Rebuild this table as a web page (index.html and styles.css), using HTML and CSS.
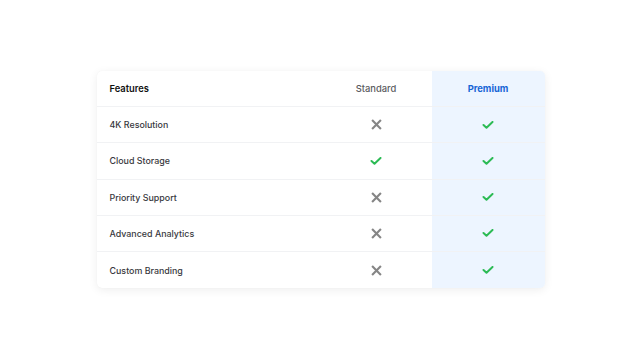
FILE: index.html
```html
<!DOCTYPE html>
<html lang="en">
<head>
<meta charset="utf-8">
<title>Plan comparison</title>
<link rel="stylesheet" href="styles.css">
</head>
<body>
<main class="page">
  <div class="table">
    <div class="row head">
      <div class="cell feat">Features</div>
      <div class="cell std">Standard</div>
      <div class="cell prem">Premium</div>
    </div>
    <div class="row">
      <div class="cell feat">4K Resolution</div>
      <div class="cell std"><svg class="ic-x" viewBox="0 0 12 12"><path d="M2 2L10 10M10 2L2 10"/></svg></div>
      <div class="cell prem"><svg class="ic-c" viewBox="0 0 12 8"><path d="M1.5 4L4.5 6.8L10.5 1"/></svg></div>
    </div>
    <div class="row">
      <div class="cell feat">Cloud Storage</div>
      <div class="cell std"><svg class="ic-c" viewBox="0 0 12 8"><path d="M1.5 4L4.5 6.8L10.5 1"/></svg></div>
      <div class="cell prem"><svg class="ic-c" viewBox="0 0 12 8"><path d="M1.5 4L4.5 6.8L10.5 1"/></svg></div>
    </div>
    <div class="row">
      <div class="cell feat">Priority Support</div>
      <div class="cell std"><svg class="ic-x" viewBox="0 0 12 12"><path d="M2 2L10 10M10 2L2 10"/></svg></div>
      <div class="cell prem"><svg class="ic-c" viewBox="0 0 12 8"><path d="M1.5 4L4.5 6.8L10.5 1"/></svg></div>
    </div>
    <div class="row">
      <div class="cell feat">Advanced Analytics</div>
      <div class="cell std"><svg class="ic-x" viewBox="0 0 12 12"><path d="M2 2L10 10M10 2L2 10"/></svg></div>
      <div class="cell prem"><svg class="ic-c" viewBox="0 0 12 8"><path d="M1.5 4L4.5 6.8L10.5 1"/></svg></div>
    </div>
    <div class="row last">
      <div class="cell feat">Custom Branding</div>
      <div class="cell std"><svg class="ic-x" viewBox="0 0 12 12"><path d="M2 2L10 10M10 2L2 10"/></svg></div>
      <div class="cell prem"><svg class="ic-c" viewBox="0 0 12 8"><path d="M1.5 4L4.5 6.8L10.5 1"/></svg></div>
    </div>
  </div>
</main>
</body>
</html>
```

FILE: styles.css
```css
* { box-sizing: border-box; }
html, body { margin: 0; padding: 0; background: #ffffff; }
body { font-family: Inter, "Noto Sans", "Liberation Sans", sans-serif; }
.page {
  min-height: 360px;
  display: flex;
  align-items: center;
  justify-content: center;
  padding-bottom: 1px;
}
.table {
  width: 448px;
  background: #fff;
  border-radius: 5px;
  overflow: hidden;
  box-shadow: 0 2px 10px rgba(0,0,0,0.07), 0 0 1px rgba(0,0,0,0.06);
}
.row {
  display: grid;
  grid-template-columns: 224px 111px 113px;
  height: 36.3px;
  border-bottom: 1px solid #f1f2f4;
}
.row.last { border-bottom: none; }
.cell {
  display: flex;
  align-items: center;
  font-size: 8.9px;
  font-weight: 500;
  color: #38383d;
}
.feat { padding-left: 13px; }
.std, .prem { justify-content: center; }
.prem { background: #edf5ff; }
.head .cell { font-size: 9.4px; }
.head .feat { font-weight: 600; color: #111; }
.head .std { font-weight: 500; color: #5b5b60; }
.head .prem { font-weight: 700; color: #1766d6; }
.ic-x { width: 11px; height: 11px; }
.ic-x path { stroke: #858585; stroke-width: 2.3; fill: none; stroke-linecap: square; }
.ic-c { width: 12px; height: 8px; }
.ic-c path { stroke: #2dbb55; stroke-width: 2; fill: none; stroke-linecap: round; stroke-linejoin: round; }
```
